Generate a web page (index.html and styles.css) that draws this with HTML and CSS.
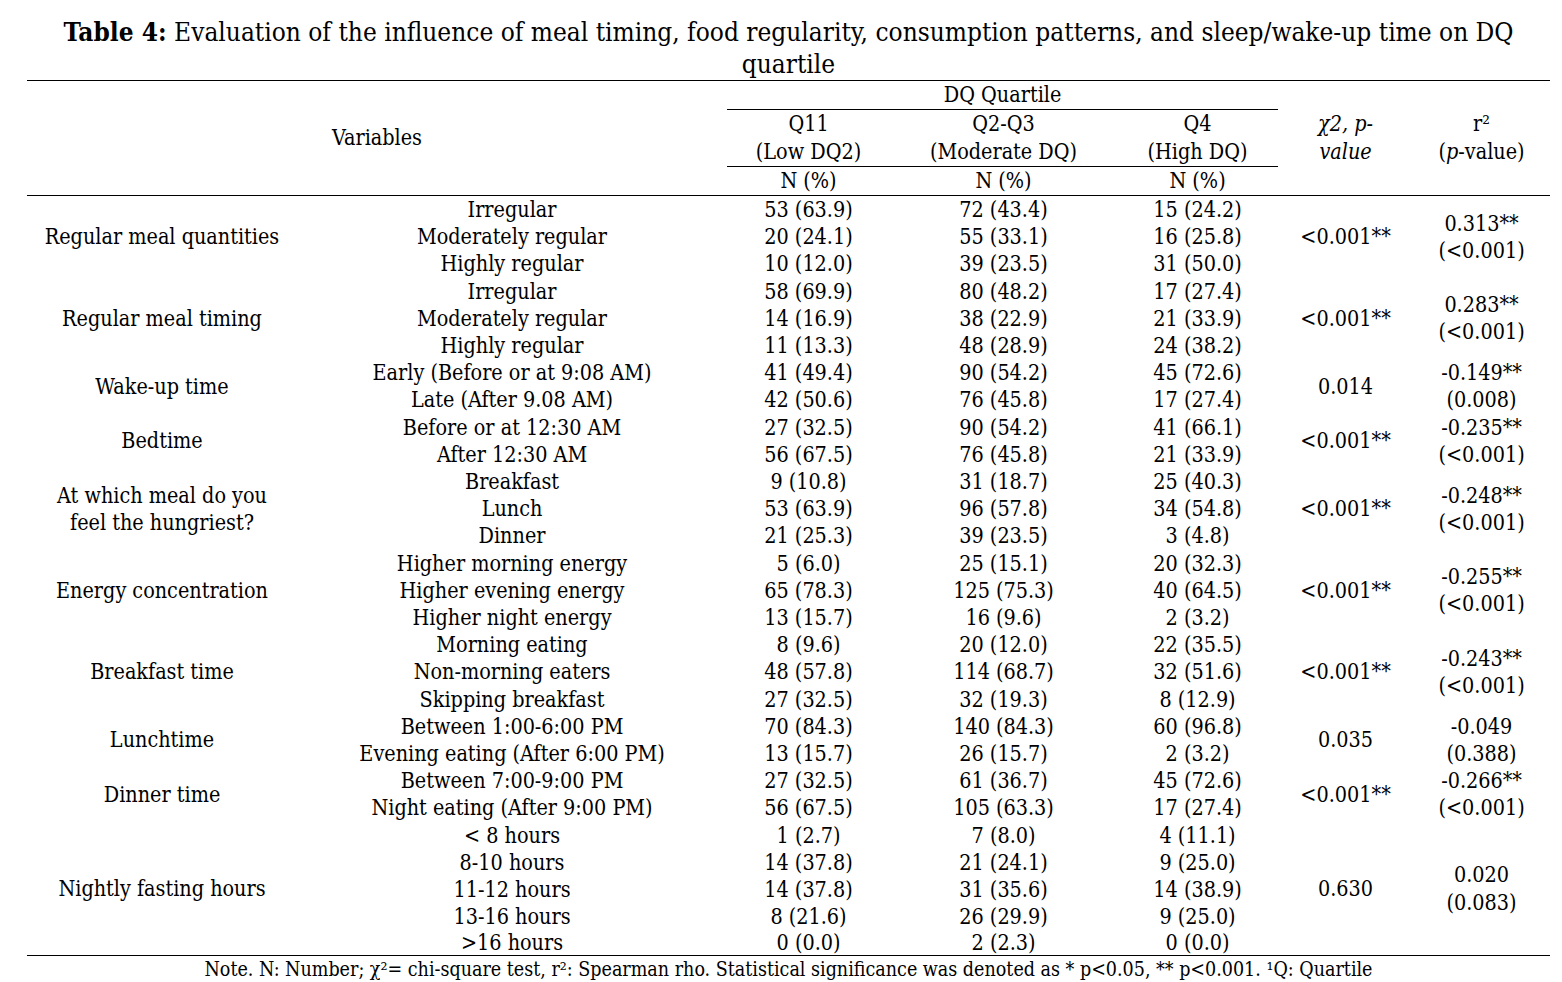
FILE: index.html
```html
<!DOCTYPE html>
<html lang="en">
<head>
<meta charset="utf-8">
<title>Table 4</title>
<link rel="stylesheet" href="styles.css">
</head>
<body>
<div class="page">
  <h1 class="caption"><b>Table 4:</b> Evaluation of the influence of meal timing, food regularity, consumption patterns, and sleep/wake-up time on DQ<br>quartile</h1>
  <table class="tbl">
    <colgroup>
      <col class="c-var"><col class="c-cat"><col class="c-q1"><col class="c-q2"><col class="c-q4"><col class="c-chi"><col class="c-r">
    </colgroup>
    <thead>
      <tr class="h-a">
        <th colspan="2" rowspan="3">Variables</th>
        <th colspan="3" class="under">DQ Quartile</th>
        <th rowspan="3" class="it">χ2, p-<br>value</th>
        <th rowspan="3">r²<br>(<i>p</i>-value)</th>
      </tr>
      <tr class="h-b">
        <th class="under">Q11<br>(Low DQ2)</th>
        <th class="under">Q2-Q3<br>(Moderate DQ)</th>
        <th class="under">Q4<br>(High DQ)</th>
      </tr>
      <tr class="h-c">
        <th>N (%)</th><th>N (%)</th><th>N (%)</th>
      </tr>
    </thead>
    <tbody>
      <tr><td rowspan="3">Regular meal quantities</td><td>Irregular</td><td>53 (63.9)</td><td>72 (43.4)</td><td>15 (24.2)</td><td rowspan="3">&lt;0.001**</td><td rowspan="3">0.313**<br>(&lt;0.001)</td></tr>
      <tr><td>Moderately regular</td><td>20 (24.1)</td><td>55 (33.1)</td><td>16 (25.8)</td></tr>
      <tr><td>Highly regular</td><td>10 (12.0)</td><td>39 (23.5)</td><td>31 (50.0)</td></tr>

      <tr><td rowspan="3">Regular meal timing</td><td>Irregular</td><td>58 (69.9)</td><td>80 (48.2)</td><td>17 (27.4)</td><td rowspan="3">&lt;0.001**</td><td rowspan="3">0.283**<br>(&lt;0.001)</td></tr>
      <tr><td>Moderately regular</td><td>14 (16.9)</td><td>38 (22.9)</td><td>21 (33.9)</td></tr>
      <tr><td>Highly regular</td><td>11 (13.3)</td><td>48 (28.9)</td><td>24 (38.2)</td></tr>

      <tr><td rowspan="2">Wake-up time</td><td>Early (Before or at 9:08 AM)</td><td>41 (49.4)</td><td>90 (54.2)</td><td>45 (72.6)</td><td rowspan="2">0.014</td><td rowspan="2">-0.149**<br>(0.008)</td></tr>
      <tr><td>Late (After 9.08 AM)</td><td>42 (50.6)</td><td>76 (45.8)</td><td>17 (27.4)</td></tr>

      <tr><td rowspan="2">Bedtime</td><td>Before or at 12:30 AM</td><td>27 (32.5)</td><td>90 (54.2)</td><td>41 (66.1)</td><td rowspan="2">&lt;0.001**</td><td rowspan="2">-0.235**<br>(&lt;0.001)</td></tr>
      <tr><td>After 12:30 AM</td><td>56 (67.5)</td><td>76 (45.8)</td><td>21 (33.9)</td></tr>

      <tr><td rowspan="3">At which meal do you<br>feel the hungriest?</td><td>Breakfast</td><td>9 (10.8)</td><td>31 (18.7)</td><td>25 (40.3)</td><td rowspan="3">&lt;0.001**</td><td rowspan="3">-0.248**<br>(&lt;0.001)</td></tr>
      <tr><td>Lunch</td><td>53 (63.9)</td><td>96 (57.8)</td><td>34 (54.8)</td></tr>
      <tr><td>Dinner</td><td>21 (25.3)</td><td>39 (23.5)</td><td>3 (4.8)</td></tr>

      <tr><td rowspan="3">Energy concentration</td><td>Higher morning energy</td><td>5 (6.0)</td><td>25 (15.1)</td><td>20 (32.3)</td><td rowspan="3">&lt;0.001**</td><td rowspan="3">-0.255**<br>(&lt;0.001)</td></tr>
      <tr><td>Higher evening energy</td><td>65 (78.3)</td><td>125 (75.3)</td><td>40 (64.5)</td></tr>
      <tr><td>Higher night energy</td><td>13 (15.7)</td><td>16 (9.6)</td><td>2 (3.2)</td></tr>

      <tr><td rowspan="3">Breakfast time</td><td>Morning eating</td><td>8 (9.6)</td><td>20 (12.0)</td><td>22 (35.5)</td><td rowspan="3">&lt;0.001**</td><td rowspan="3">-0.243**<br>(&lt;0.001)</td></tr>
      <tr><td>Non-morning eaters</td><td>48 (57.8)</td><td>114 (68.7)</td><td>32 (51.6)</td></tr>
      <tr><td>Skipping breakfast</td><td>27 (32.5)</td><td>32 (19.3)</td><td>8 (12.9)</td></tr>

      <tr><td rowspan="2">Lunchtime</td><td>Between 1:00-6:00 PM</td><td>70 (84.3)</td><td>140 (84.3)</td><td>60 (96.8)</td><td rowspan="2">0.035</td><td rowspan="2">-0.049<br>(0.388)</td></tr>
      <tr><td>Evening eating (After 6:00 PM)</td><td>13 (15.7)</td><td>26 (15.7)</td><td>2 (3.2)</td></tr>

      <tr><td rowspan="2">Dinner time</td><td>Between 7:00-9:00 PM</td><td>27 (32.5)</td><td>61 (36.7)</td><td>45 (72.6)</td><td rowspan="2">&lt;0.001**</td><td rowspan="2">-0.266**<br>(&lt;0.001)</td></tr>
      <tr><td>Night eating (After 9:00 PM)</td><td>56 (67.5)</td><td>105 (63.3)</td><td>17 (27.4)</td></tr>

      <tr><td rowspan="5">Nightly fasting hours</td><td>&lt; 8 hours</td><td>1 (2.7)</td><td>7 (8.0)</td><td>4 (11.1)</td><td rowspan="5">0.630</td><td rowspan="5">0.020<br>(0.083)</td></tr>
      <tr><td>8-10 hours</td><td>14 (37.8)</td><td>21 (24.1)</td><td>9 (25.0)</td></tr>
      <tr><td>11-12 hours</td><td>14 (37.8)</td><td>31 (35.6)</td><td>14 (38.9)</td></tr>
      <tr><td>13-16 hours</td><td>8 (21.6)</td><td>26 (29.9)</td><td>9 (25.0)</td></tr>
      <tr class="last"><td>&gt;16 hours</td><td>0 (0.0)</td><td>2 (2.3)</td><td>0 (0.0)</td></tr>
    </tbody>
  </table>
  <p class="note">Note. N: Number; χ²= chi-square test, r²: Spearman rho. Statistical significance was denoted as * p&lt;0.05, ** p&lt;0.001. ¹Q: Quartile</p>
</div>
</body>
</html>
```

FILE: styles.css
```css
html, body {
  margin: 0;
  padding: 0;
  background: #ffffff;
}

body {
  font-family: "DejaVu Serif Condensed", "DejaVu Serif", "Liberation Serif", serif;
  font-stretch: condensed;
  color: #000000;
}

.page {
  width: 1523px;
  margin-left: 27px;
}

.caption {
  margin: 0;
  padding-top: 16px;
  font-size: 26px;
  line-height: 32px;
  font-weight: normal;
  text-align: center;
}

.caption b {
  font-weight: bold;
}

.tbl {
  width: 1523px;
  border-collapse: collapse;
  table-layout: fixed;
  font-size: 21.4px;
  border-top: 1px solid #000;
  border-bottom: 1px solid #000;
}

.c-var { width: 270px; }
.c-cat { width: 430px; }
.c-q1 { width: 163px; }
.c-q2 { width: 227px; }
.c-q4 { width: 161px; }
.c-chi { width: 135px; }
.c-r { width: 137px; }

.tbl th,
.tbl td {
  padding: 0;
  text-align: center;
  vertical-align: middle;
  font-weight: normal;
  line-height: 27.2px;
  white-space: nowrap;
}

.tbl th {
  line-height: 28px;
}

.tbl thead {
  border-bottom: 1px solid #000;
}

.tbl th.under {
  border-bottom: 1px solid #000;
}

.tbl th.it {
  font-style: italic;
}

.h-a { height: 28px; }
.h-b { height: 57px; }
.h-c { height: 27px; }

.tbl tbody tr {
  height: 27.2px;
}

.tbl tbody tr.last {
  height: 25px;
}

.tbl tbody tr.last td {
  line-height: 25px;
}

.note {
  margin: 0;
  padding-top: 1px;
  text-align: center;
  font-size: 19.5px;
  line-height: 26px;
}
```
